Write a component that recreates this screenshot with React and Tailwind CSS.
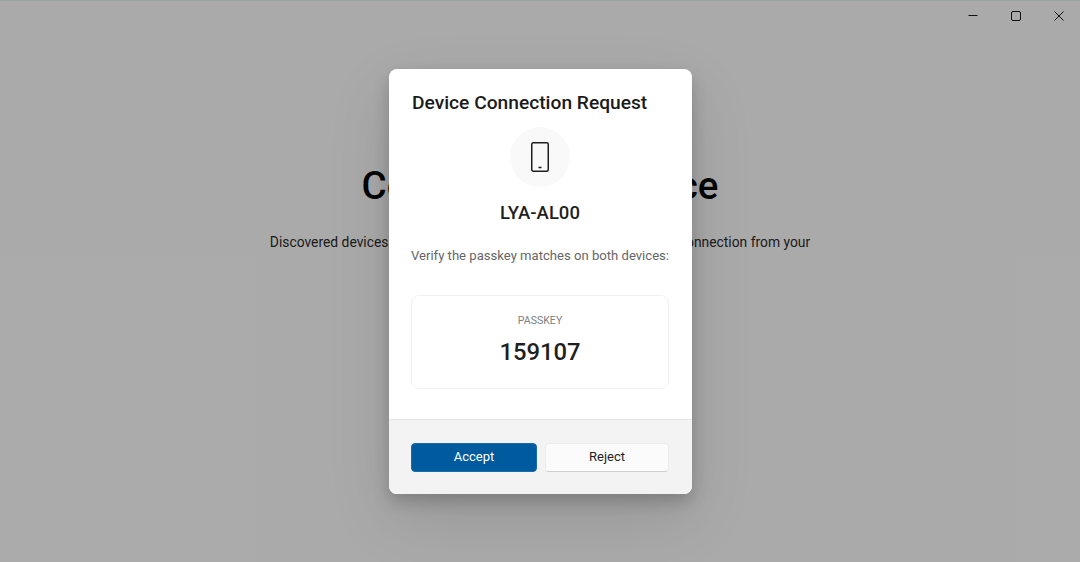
function PhoneIcon() {
  return (
    <svg width="20" height="32" viewBox="0 0 20 32" fill="none" stroke="#1f1f1f">
      <rect x="1.75" y="1.75" width="16.5" height="28.5" rx="1.5" strokeWidth="1.5" />
      <path d="M8.5 26.5h3" strokeWidth="1.5" />
    </svg>
  );
}

function WindowControls() {
  return (
    <div className="flex h-[30px] justify-end">
      <div className="flex w-[43px] items-center justify-center">
        <svg width="12" height="12" viewBox="0 0 12 12" stroke="#1a1a1a" fill="none">
          <path d="M1.5 5.5h9" />
        </svg>
      </div>
      <div className="flex w-[43px] items-center justify-center">
        <svg width="12" height="12" viewBox="0 0 12 12" stroke="#1a1a1a" fill="none">
          <rect x="1.5" y="1.5" width="9" height="9" rx="1.5" />
        </svg>
      </div>
      <div className="flex w-[43px] items-center justify-center">
        <svg width="12" height="12" viewBox="0 0 12 12" stroke="#1a1a1a" fill="none">
          <path d="M1.5 1.5l9 9M10.5 1.5l-9 9" />
        </svg>
      </div>
    </div>
  );
}

function ConnectDialog() {
  return (
    <div className="absolute inset-0 flex items-center justify-center bg-black/30">
      <div className="ml-px flex h-[425px] w-[303px] flex-col overflow-hidden rounded-lg bg-white shadow-[0_8px_16px_rgba(0,0,0,0.18),0_24px_64px_rgba(0,0,0,0.12)]">
        <div className="flex flex-1 flex-col pt-[20px] pr-[23px] pl-[22px]">
          <h2 className="whitespace-nowrap pl-px text-[19.2px] leading-[28px] font-medium text-[#1b1b1b]">Device Connection Request</h2>
          <div className="mx-auto mt-[10px] flex h-[60px] w-[60px] items-center justify-center rounded-full bg-[#f9f9f9]">
            <PhoneIcon />
          </div>
          <p className="mt-[13px] text-center text-[18.5px] leading-[26px] font-medium text-[#1f1f1f]">LYA-AL00</p>
          <p className="mt-[20px] whitespace-nowrap text-[13.1px] leading-[20px] text-[#666666]">Verify the passkey matches on both devices:</p>
          <div className="mt-[29px] flex h-[94px] flex-col items-center rounded-lg border border-[#f0f0f0] pt-[16px]">
            <span className="text-[10.6px] leading-[18px] text-[#808080]">PASSKEY</span>
            <span className="mt-[4px] text-[23.8px] leading-[36px] font-medium text-[#1f1f1f]">159107</span>
          </div>
        </div>
        <div className="flex h-[75px] gap-2 border-t border-[#e5e5e5] bg-[#f3f3f3] pt-[23px] pr-[23px] pl-[22px]">
          <button className="h-[29px] w-[126px] rounded-[4px] border border-[#1a6bab] bg-[#005a9e] pb-px text-[13px] text-white">Accept</button>
          <button className="h-[29px] w-[124px] rounded-[4px] border border-[#ececec] border-b-[#cfcfcf] bg-[#fbfbfb] pb-px text-[13px] text-[#1f1f1f]">Reject</button>
        </div>
      </div>
    </div>
  );
}

export default function App() {
  return (
    <div className="relative h-[562px] w-[1080px] overflow-hidden bg-[#f4f4f4] font-['Roboto',sans-serif]">
      <div className="h-px bg-[#d8ece4]" />
      <WindowControls />
      <div className="mt-[132px] flex flex-col items-center">
        <h1 className="text-[38.5px] leading-[46px] font-medium text-[#0a0a0a]">Connect Your Device</h1>
        <p className="mt-[23px] text-[13.85px] leading-[20px] text-[#2a2a2a]">
          Discovered devices in your network will show up below, accept the connection from your
        </p>
      </div>
      <ConnectDialog />
    </div>
  );
}
